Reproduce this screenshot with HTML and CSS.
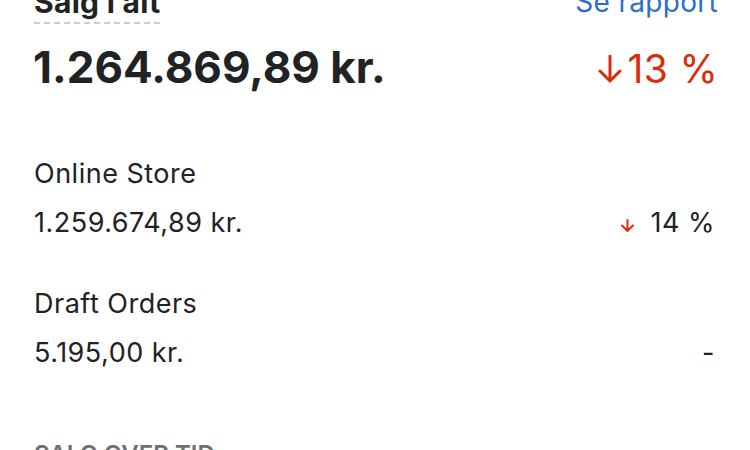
FILE: index.html
```html
<!DOCTYPE html>
<html lang="da">
<head>
    <meta charset="UTF-8">
    <meta name="viewport" content="width=device-width, initial-scale=1.0">
    <title>Salg i alt</title>
    <link rel="stylesheet" href="styles.css">
</head>
<body>
    <div class="page">
        <div class="head">
            <span class="title">Salg i alt</span>
            <a class="link" href="#">Se rapport</a>
        </div>

        <div class="total">
            <span class="amount">1.264.869,89 kr.</span>
            <span class="change big">
                <svg class="arrow" width="24" height="28" viewBox="0 0 24 28">
                    <path d="M12 1v25M2 16l10 10 10-10" fill="none" stroke="currentColor" stroke-width="3" stroke-linecap="round" stroke-linejoin="round"/>
                </svg>13 %
            </span>
        </div>

        <ul class="channels">
            <li class="channel">
                <div class="name">Online Store</div>
                <div class="row">
                    <span>1.259.674,89 kr.</span>
                    <span class="change">
                        <svg class="arrow small" width="15" height="13" viewBox="0 0 15 13">
                            <path d="M7.5 1v11M2 6.5l5.5 5.5 5.5-5.5" fill="none" stroke="currentColor" stroke-width="2" stroke-linecap="round" stroke-linejoin="round"/>
                        </svg>
                        <span class="pct">14 %</span>
                    </span>
                </div>
            </li>
            <li class="channel">
                <div class="name">Draft Orders</div>
                <div class="row">
                    <span>5.195,00 kr.</span>
                    <span class="pct">-</span>
                </div>
            </li>
        </ul>

        <h2 class="section">Salg over tid</h2>
    </div>
</body>
</html>
```

FILE: styles.css
```css
* {
  box-sizing: border-box;
}

body {
  margin: 0;
  font-family: Inter, "Noto Sans", sans-serif;
  color: #202223;
  background-color: #fff;
  overflow: hidden;
}

.page {
  margin-top: -14px;
  padding: 0 32px 0 34px;
}

.head {
  display: flex;
  justify-content: space-between;
  align-items: flex-start;
}

.title {
  font-size: 30px;
  font-weight: 700;
  line-height: 32px;
  letter-spacing: 0.3px;
  padding-bottom: 4px;
  border-bottom: 2px dashed #c9cfd6;
}

.link {
  font-size: 28px;
  line-height: 32px;
  letter-spacing: 0.3px;
  color: #2c6ecb;
  text-decoration: none;
}

.total {
  display: flex;
  justify-content: space-between;
  align-items: baseline;
  margin-top: 17px;
  line-height: 52px;
}

.amount {
  font-size: 44px;
  font-weight: 700;
  margin-left: -1px;
}

.change {
  display: flex;
  align-items: baseline;
  color: #d82c0d;
}

.change.big {
  font-size: 39px;
  letter-spacing: 0.3px;
}

.arrow {
  margin-right: 6px;
}

.arrow.small {
  margin-right: 15px;
}

.channels {
  list-style: none;
  margin: 54px 0 0;
  padding: 0;
  display: flex;
  flex-direction: column;
  gap: 32px;
}

.channel {
  font-size: 27px;
  line-height: 49px;
  letter-spacing: 0.5px;
}

.row {
  display: flex;
  justify-content: space-between;
  align-items: baseline;
  padding-right: 3px;
}

.pct {
  color: #202223;
}

.section {
  margin: 62px 0 0;
  font-size: 24px;
  font-weight: 600;
  line-height: 32px;
  letter-spacing: 0;
  text-transform: uppercase;
  color: #6d7175;
}
```
